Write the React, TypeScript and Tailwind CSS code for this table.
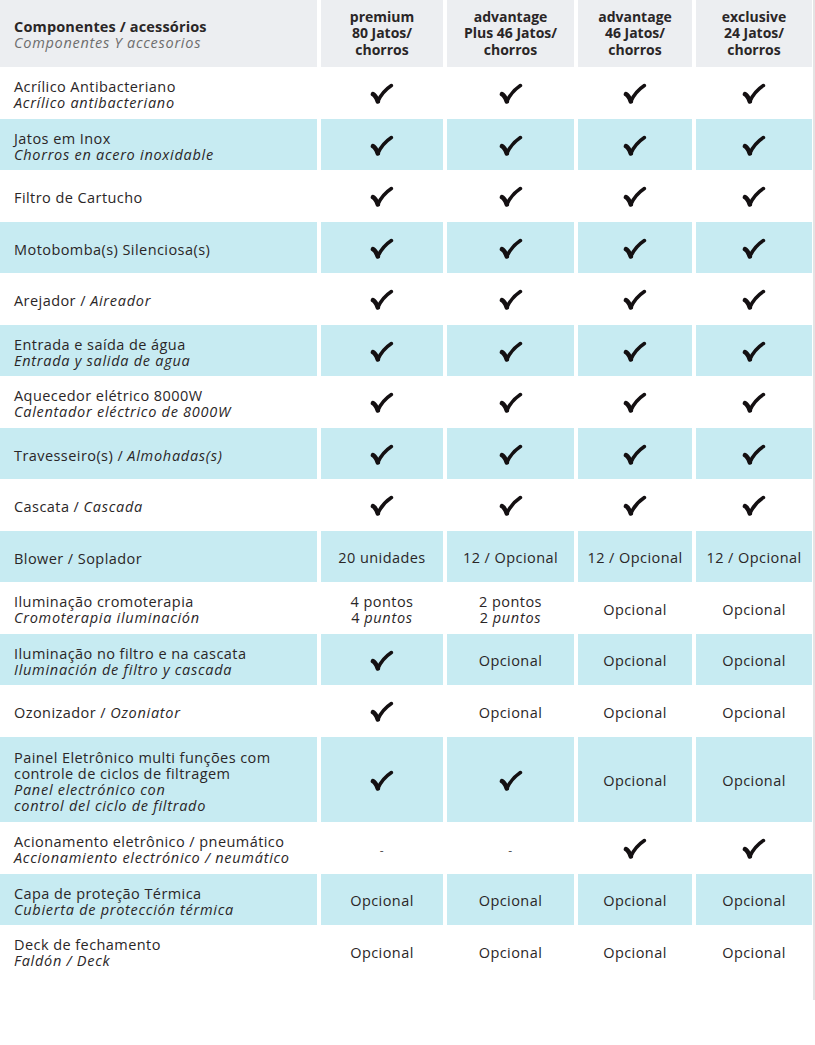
import type { ReactNode } from "react"

type Cell = "check" | "dash" | ReactNode

type Row = {
  pt: ReactNode
  es?: ReactNode
  cells: Cell[]
  blue?: boolean
  tall?: boolean
}

// brush style check mark
function Check() {
  return (
    <svg viewBox="0 0 24 22" className="h-[22px] w-[24px]" fill="none" stroke="#141012" strokeLinecap="round" strokeLinejoin="round">
      <path d="M3 12.2Q5.6 13.4 7.8 19.4" strokeWidth="4.6" />
      <path d="M7.8 19.4Q12.5 9.5 21.4 3.6" strokeWidth="3.6" />
    </svg>
  )
}

const all = ["check", "check", "check", "check"] as Cell[]
const opc = ["Opcional", "Opcional", "Opcional", "Opcional"] as Cell[]

const It = ({ children }: { children: ReactNode }) => <i className="tracking-[0.05em]">{children}</i>

const rows: Row[] = [
  { pt: "Acrílico Antibacteriano", es: "Acrílico antibacteriano", cells: all },
  { pt: "Jatos em Inox", es: "Chorros en acero inoxidable", cells: all, blue: true },
  { pt: "Filtro de Cartucho", cells: all },
  { pt: "Motobomba(s) Silenciosa(s)", cells: all, blue: true },
  { pt: <>Arejador / <It>Aireador</It></>, cells: all },
  { pt: "Entrada e saída de água", es: "Entrada y salida de agua", cells: all, blue: true },
  { pt: "Aquecedor elétrico 8000W", es: "Calentador eléctrico de 8000W", cells: all },
  { pt: <>Travesseiro(s) / <It>Almohadas(s)</It></>, cells: all, blue: true },
  { pt: <>Cascata / <It>Cascada</It></>, cells: all },
  { pt: "Blower / Soplador", cells: ["20 unidades", "12 / Opcional", "12 / Opcional", "12 / Opcional"], blue: true },
  {
    pt: "Iluminação cromoterapia",
    es: "Cromoterapia iluminación",
    cells: [
      <>4 pontos<br />4 <It>puntos</It></>,
      <>2 pontos<br />2 <It>puntos</It></>,
      "Opcional",
      "Opcional",
    ],
  },
  { pt: "Iluminação no filtro e na cascata", es: "Iluminación de filtro y cascada", cells: ["check", "Opcional", "Opcional", "Opcional"], blue: true },
  { pt: <>Ozonizador / <It>Ozoniator</It></>, cells: ["check", "Opcional", "Opcional", "Opcional"] },
  {
    pt: <>Painel Eletrônico multi funções com<br />controle de ciclos de filtragem</>,
    es: <>Panel electrónico con<br />control del ciclo de filtrado</>,
    cells: ["check", "check", "Opcional", "Opcional"],
    blue: true,
    tall: true,
  },
  { pt: "Acionamento eletrônico / pneumático", es: "Accionamiento electrónico / neumático", cells: ["dash", "dash", "check", "check"] },
  { pt: "Capa de proteção Térmica", es: "Cubierta de protección térmica", cells: opc, blue: true },
  { pt: "Deck de fechamento", es: "Faldón / Deck", cells: opc },
]

const heads: ReactNode[] = [
  <>premium<br />80 Jatos/<br />chorros</>,
  <>advantage<br />Plus 46 Jatos/<br />chorros</>,
  <>advantage<br />46 Jatos/<br />chorros</>,
  <>exclusive<br />24 Jatos/<br />chorros</>,
]

function Value({ v }: { v: Cell }) {
  if (v === "check") return <Check />
  if (v === "dash") return <span className="mt-[5px] text-[12px] text-[#555]">-</span>
  return <span className="pt-[3px]">{v}</span>
}

export default function App() {
  return (
    <div className="w-[815px] h-[1045px] bg-white font-['Open_Sans',sans-serif] text-[14.5px] leading-[16px] tracking-[0.03em] text-[#2a2627]">
      <div className="w-[815px] pb-[23px] border-r-2 border-[#e4e4e4]">
        <div className="grid grid-cols-[317px_122px_127px_114px_116px] gap-x-[4px] gap-y-[0.5px]">
          <div className="h-[67px] bg-[#eceef1] pl-[14px] pt-[2px] flex flex-col justify-center">
            <div className="font-bold tracking-[0.01em]">Componentes / acessórios</div>
            <div className="italic tracking-[0.05em] text-[#6d6d6d]">Componentes Y accesorios</div>
          </div>
          {heads.map((h, i) => (
            <div key={i} className="h-[67px] bg-[#eceef1] flex items-center justify-center text-center font-bold text-[14px] tracking-normal leading-[16.5px]">
              <div>{h}</div>
            </div>
          ))}
          {rows.map((r, i) => {
            const bg = r.blue ? "bg-[#c7ebf2]" : "bg-white"
            const h = r.tall ? "h-[85px]" : "h-[51px]"
            return [
              <div key={`l${i}`} className={`${bg} ${h} pl-[14px] pt-[4px] flex flex-col justify-center`}>
                <div>{r.pt}</div>
                {r.es && <div className="italic tracking-[0.05em]">{r.es}</div>}
              </div>,
              ...r.cells.map((c, j) => (
                <div key={`c${i}-${j}`} className={`${bg} ${h} flex items-center justify-center text-center`}>
                  <Value v={c} />
                </div>
              )),
            ]
          })}
        </div>
      </div>
    </div>
  )
}
